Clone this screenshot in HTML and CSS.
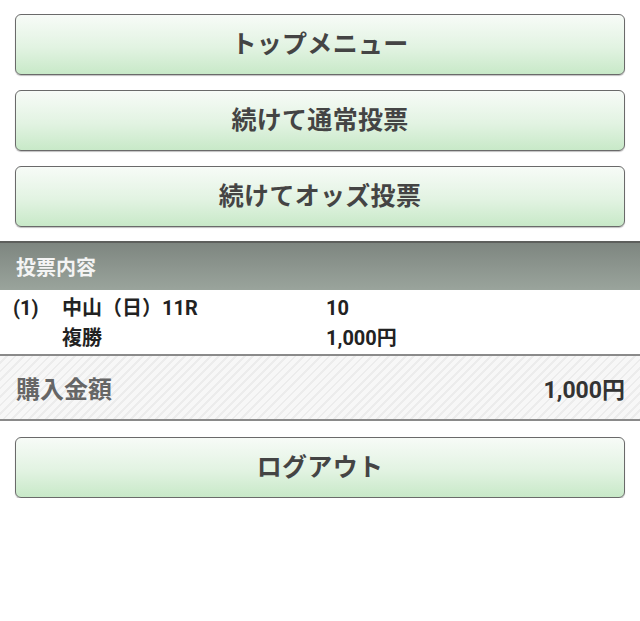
FILE: index.html
```html
<!DOCTYPE html>
<html lang="ja">
<head>
<meta charset="utf-8">
<link rel="stylesheet" href="styles.css">
</head>
<body>
<div class="buttons top">
  <a class="btn">トップメニュー</a>
  <a class="btn">続けて通常投票</a>
  <a class="btn">続けてオッズ投票</a>
</div>
<div class="section-head">投票内容</div>
<div class="bet">
  <div class="num">(1)</div>
  <div class="col race">
    <div>中山（日）11R</div>
    <div>複勝</div>
  </div>
  <div class="col sel">
    <div>10</div>
    <div>1,000円</div>
  </div>
</div>
<div class="total">
  <span class="label">購入金額</span>
  <span class="amount">1,000円</span>
</div>
<div class="buttons bottom">
  <a class="btn">ログアウト</a>
</div>
</body>
</html>
```
FILE: styles.css
```css
html, body {
  margin: 0;
  padding: 0;
  background: #fff;
  font-family: Roboto, "Noto Sans CJK JP", sans-serif;
}
.buttons {
  display: flex;
  flex-direction: column;
  gap: 15px;
  padding: 14px 15px 0 15px;
}
.buttons.top {
  padding-bottom: 14px;
}
.buttons.bottom {
  padding-top: 16px;
}
.btn {
  display: flex;
  align-items: center;
  justify-content: center;
  height: 59px;
  border: 1px solid #6a6a6a;
  border-radius: 6px;
  background: linear-gradient(to bottom, #f7fbf7 0%, #e2f3e2 55%, #c8e9c8 100%);
  box-shadow: 0 1px 1px rgba(0,0,0,0.25);
  color: #444;
  font-size: 25px;
  font-weight: bold;
  line-height: 1;
  letter-spacing: 0.3px;
}
.section-head {
  height: 47px;
  border-top: 2px solid #5d5f5c;
  background: linear-gradient(to bottom, #7e8680 0%, #9aa49c 100%);
  color: #f4f4f4;
  font-size: 20px;
  font-weight: bold;
  display: flex;
  align-items: center;
  padding-left: 16px;
}
.bet {
  display: flex;
  height: 66px;
  box-sizing: border-box;
  padding-top: 3px;
  color: #222;
  font-size: 20px;
  font-weight: bold;
  line-height: 30px;
  border-bottom: 2px solid #8a8a8a;
}
.num {
  width: 49px;
  padding-left: 13px;
}
.race {
  width: 264px;
}
.total {
  height: 65px;
  box-sizing: border-box;
  border-bottom: 2px solid #8a8a8a;
  background: repeating-linear-gradient(135deg, #f7f7f7 0px, #f7f7f7 4px, #ececec 4px, #ececec 6px);
  display: flex;
  align-items: center;
  justify-content: space-between;
  padding: 0 15px 0 16px;
  font-weight: bold;
}
.label {
  color: #666;
  font-size: 24px;
}
.amount {
  color: #333;
  font-size: 23px;
}
```
